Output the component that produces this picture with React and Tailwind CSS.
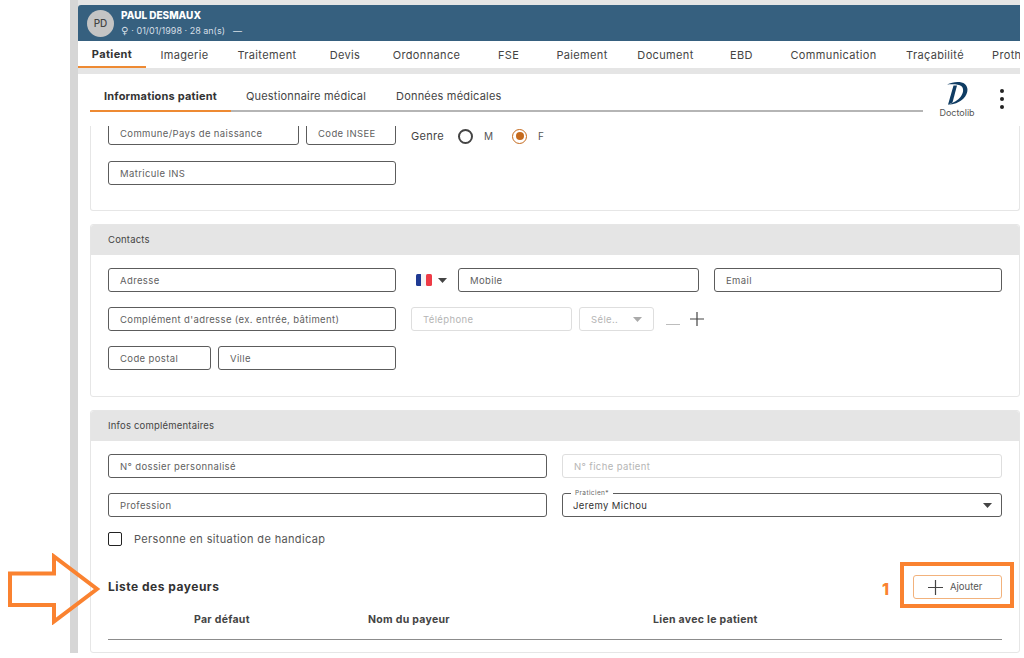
import React from "react";

const font = { fontFamily: '"Inter","Noto Sans",sans-serif' };

function Field({ w, label, disabled, value, floating }) {
  return (
    <div className={`relative h-[24px] shrink-0 rounded-[3px] border flex items-center pl-[11px] pt-[2px] text-[9.5px] tracking-[0.38px] ${w} ${disabled ? "border-[#dedede] text-[#b5b5b5]" : "border-[#5c5c5c] text-[#5f5f5f]"}`}>
      {floating && <span className="absolute left-[8px] top-[-5px] bg-white px-[4px] text-[6.5px] leading-[8px] text-[#666]">{floating}</span>}
      {value ? <span className="text-[#333] -ml-[1px]">{value}</span> : label}
    </div>
  );
}

function Caret({ color = "#444", cls = "" }) {
  return (
    <svg width="9" height="5" viewBox="0 0 9 5" className={cls}>
      <path d="M0 0h9L4.5 5z" fill={color} />
    </svg>
  );
}

function Card({ title, children, cls }) {
  return (
    <section className={`w-[930px] shrink-0 rounded-[3px] bg-white border border-[#e6e6e6] ${cls}`}>
      <div className="h-[30px] bg-[#e5e5e5] rounded-t-[3px] flex items-center pl-[17px] text-[9.5px] tracking-[0.2px] text-[#444]">{title}</div>
      {children}
    </section>
  );
}

const tabs = [
  ["Imagerie", "w-[77px]"],
  ["Traitement", "w-[88px]"],
  ["Devis", "w-[68px]"],
  ["Ordonnance", "w-[95px]"],
  ["FSE", "w-[69px]"],
  ["Paiement", "w-[78px]"],
  ["Document", "w-[89px]"],
  ["EBD", "w-[63px]"],
  ["Communication", "w-[121px]"],
  ["Traçabilité", "w-[82px]"],
];

export default function App() {
  return (
    <div className="relative flex w-[1024px] h-[658px] overflow-hidden bg-white text-[#333]" style={font}>
      <div className="w-[70px] shrink-0 bg-white" />
      <div className="w-[8px] shrink-0 h-[653px] bg-[#d6d6d6]" />
      <main className="w-[942px] shrink-0 h-[653px] flex flex-col bg-[#e5e5e5]">
        <div className="h-[5px] shrink-0" />
        <header className="h-[36px] shrink-0 bg-[#36607f] rounded-tl-[3px] flex items-center pl-[9px] text-white">
          <div className="w-[27px] h-[27px] rounded-full bg-[#c4c4c4] text-[#444] text-[10px] font-medium flex items-center justify-center">PD</div>
          <div className="ml-[7px]">
            <div className="text-[10px] leading-[13px] font-extrabold">PAUL DESMAUX</div>
            <div className="text-[9px] leading-[13px] text-[#d5dfe6] mt-[2px] flex items-center">
              <span className="font-['DejaVu_Sans'] text-[10px] leading-[13px] mr-[3px]">♀</span>
              <span>· 01/01/1998 · 28 an(s)</span>
              <span className="ml-[8px]">—</span>
            </div>
          </div>
        </header>
        <nav className="h-[27px] shrink-0 bg-white flex pt-[1px] text-[11px] tracking-[0.35px] text-[#444] overflow-hidden">
          <div className="w-[68px] shrink-0 h-full flex items-center justify-center font-bold text-[#333] border-b-2 border-[#ee8a33]">Patient</div>
          {tabs.map(([t, w]) => (
            <div key={t} className={`${w} shrink-0 h-full flex items-center justify-center`}>{t}</div>
          ))}
          <div className="pl-[16px] h-full flex items-center">Proth</div>
        </nav>
        <div className="h-[6px] shrink-0" />
        <div className="flex-1 min-h-0 bg-white flex flex-col">
          <div className="h-[52px] shrink-0 relative flex items-start pl-[12px] bg-white rounded-t-[3px]">
            <div className="flex w-[833px] h-[38px] border-b-2 border-[#b5b5b5] text-[11px] tracking-[0.2px] text-[#444]">
              <div className="w-[141px] h-[38px] pt-[9px] flex items-center justify-center font-bold text-[#333] border-b-2 border-[#ee8a33] shrink-0">Informations patient</div>
              <div className="w-[150px] h-[36px] pt-[9px] flex items-center justify-center shrink-0">Questionnaire médical</div>
              <div className="pl-[15px] h-[36px] pt-[9px] flex items-center">Données médicales</div>
            </div>
            <div className="ml-[15px] mt-[7px] w-[38px] flex flex-col items-center">
              <svg width="22" height="24" viewBox="0 0 22 24">
                <path fill="#0f3c63" d="M1 3.500C7 .5 15 0 18.800 3C23 6.500 22 13 17.500 17.500 13 21.800 7.500 23.500 2 23.800 8 21.500 12 19.500 14.500 16 17.500 12 18 7.500 15.500 5.200 13 3.200 7 2.800 1 3.500Z" />
                <path fill="#0f3c63" d="M7.500 4.500H11L6.500 21.500 2 23.800Z" />
              </svg>
              <span className="text-[9px] leading-[11px] mt-[2px] text-[#555]">Doctolib</span>
            </div>
            <div className="ml-[24px] mt-[15px] flex flex-col gap-[4px]">
              <span className="w-[4px] h-[4px] rounded-full bg-[#222]" />
              <span className="w-[4px] h-[4px] rounded-full bg-[#222]" />
              <span className="w-[4px] h-[4px] rounded-full bg-[#222]" />
            </div>
          </div>

          <div className="ml-[12px] flex flex-col gap-[13px]">
            <section className="w-[930px] h-[85px] shrink-0 bg-white rounded-b-[3px] border border-t-0 border-[#e6e6e6] pl-[17px] overflow-hidden">
              <div className="flex items-center h-[19px]">
                <div className="flex gap-[7px] self-end">
                  <Field w="w-[191px]" label="Commune/Pays de naissance" />
                  <Field w="w-[90px]" label="Code INSEE" />
                </div>
                <span className="ml-[15px] text-[11px] tracking-[0.3px] text-[#444] mt-[1px]">Genre</span>
                <span className="ml-[14px] mt-[1px] w-[15px] h-[15px] rounded-full border-2 border-[#444]" />
                <span className="ml-[11px] mt-[1px] w-[28px] text-[10px] text-[#555]">M</span>
                <span className="mt-[1px] w-[15px] h-[15px] rounded-full border-[1.5px] border-[#c56a1d] flex items-center justify-center">
                  <span className="w-[8px] h-[8px] rounded-full bg-[#c56a1d]" />
                </span>
                <span className="ml-[11px] mt-[1px] text-[10px] text-[#555]">F</span>
              </div>
              <div className="mt-[16px]"><Field w="w-[288px]" label="Matricule INS" /></div>
            </section>

            <Card title="Contacts" cls="h-[173px]">
              <div className="pl-[17px] pt-[13px] flex flex-col gap-[15px]">
                <div className="flex items-center">
                  <Field w="w-[288px]" label="Adresse" />
                  <svg width="16" height="12" viewBox="0 0 16 12" className="ml-[20px]">
                    <rect width="6" height="12" rx="1.500" fill="#1f3a93" />
                    <rect x="5" width="6" height="12" fill="#f5f5f5" />
                    <rect x="10" width="6" height="12" rx="1.500" fill="#ee3b46" />
                  </svg>
                  <Caret cls="ml-[6px]" />
                  <span className="w-[11px]" />
                  <Field w="w-[241px]" label="Mobile" />
                  <span className="w-[15px]" />
                  <Field w="w-[288px]" label="Email" />
                </div>
                <div className="flex items-center">
                  <Field w="w-[288px]" label="Complément d'adresse (ex. entrée, bâtiment)" />
                  <span className="w-[15px]" />
                  <Field w="w-[161px]" label="Téléphone" disabled />
                  <span className="w-[7px]" />
                  <div className="relative">
                    <Field w="w-[75px]" label="Séle.." disabled />
                    <Caret color="#aaa" cls="absolute right-[12px] top-[10px]" />
                  </div>
                  <span className="ml-[12px] mt-[11px] w-[14px] h-[1px] bg-[#bdbdbd]" />
                  <svg width="16" height="16" viewBox="0 0 16 16" className="ml-[9px]">
                    <path d="M8 1v14M1 8h14" stroke="#444" strokeWidth="1.2" />
                  </svg>
                </div>
                <div className="flex gap-[7px]">
                  <Field w="w-[103px]" label="Code postal" />
                  <Field w="w-[178px]" label="Ville" />
                </div>
              </div>
            </Card>

            <Card title="Infos complémentaires" cls="h-[243px]">
              <div className="pl-[17px] pr-[17px] pt-[13px]">
                <div className="flex gap-[15px]">
                  <Field w="w-[439px]" label="N° dossier personnalisé" />
                  <Field w="w-[440px]" label="N° fiche patient" disabled />
                </div>
                <div className="flex gap-[15px] mt-[15px]">
                  <Field w="w-[439px]" label="Profession" />
                  <div className="relative">
                    <Field w="w-[440px]" floating="Praticien*" value="Jeremy Michou" />
                    <Caret cls="absolute right-[10px] top-[10px]" />
                  </div>
                </div>
                <div className="flex items-center mt-[15px] h-[14px]">
                  <span className="w-[14px] h-[14px] rounded-[2px] border-[1.5px] border-[#222]" />
                  <span className="ml-[12px] text-[11px] tracking-[0.35px] text-[#555]">Personne en situation de handicap</span>
                </div>
                <div className="flex items-center justify-between mt-[29px] h-[24px] w-[894px]">
                  <span className="text-[12px] font-bold tracking-[0.5px] text-[#333]">Liste des payeurs</span>
                  <div className="w-[89px] h-[24px] rounded-[3px] border border-[#f2b27c] flex items-center pl-[14px] text-[9.5px] text-[#555]">
                    <svg width="15" height="15" viewBox="0 0 15 15">
                      <path d="M7.500 0v15M0 7.500h15" stroke="#444" strokeWidth="1.2" />
                    </svg>
                    <span className="ml-[7px]">Ajouter</span>
                  </div>
                </div>
                <div className="relative h-[32px] mt-[9px] w-[894px] border-b border-[#8c8c8c] text-[10.5px] font-bold tracking-[0.3px] text-[#444]">
                  <span className="absolute left-[86px] top-[4px]">Par défaut</span>
                  <span className="absolute left-[260px] top-[4px]">Nom du payeur</span>
                  <span className="absolute left-[545px] top-[4px]">Lien avec le patient</span>
                </div>
              </div>
            </Card>
          </div>
        </div>
      </main>

      {/* annotations */}
      <svg className="absolute left-[7px] top-[553px]" width="96" height="72" viewBox="0 0 96 72" fill="none">
        <path d="M3 20.500h44V3.500L90 36 47 68.500V52H3z" stroke="#fa8230" strokeWidth="4" />
      </svg>
      <div className="absolute left-[900px] top-[562px] w-[114px] h-[46px] border-4 border-[#fa8230]" />
      <span className="absolute left-[882px] top-[579px] text-[16px] leading-[20px] font-extrabold text-[#fa8230]">1</span>
    </div>
  );
}
